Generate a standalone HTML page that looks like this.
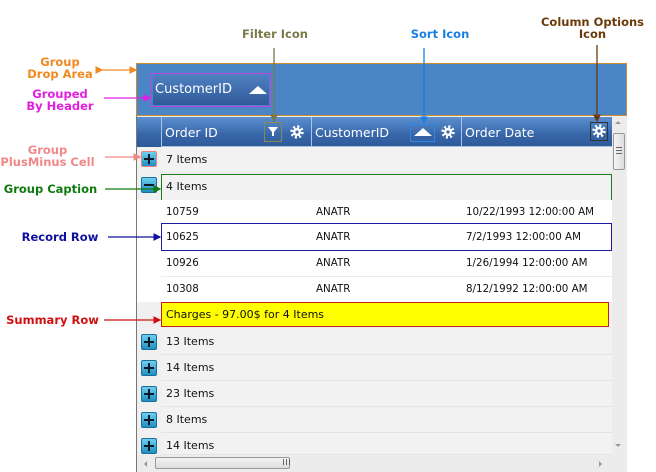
<!DOCTYPE html>
<html><head><style>
*{margin:0;padding:0;box-sizing:border-box}
body{width:656px;height:472px;background:#fff;position:relative;overflow:hidden;font-family:"DejaVu Sans","Liberation Sans",sans-serif;font-size:11px;color:#111}
.a{position:absolute}
.lbl{position:absolute;font-family:"DejaVu Sans",sans-serif;font-weight:bold;font-size:11.5px;text-align:center;line-height:12px;white-space:nowrap}
.row{position:absolute;left:161px;width:451px;height:26px;background:#f2f2f2;border-bottom:1px solid #e4e4e4;line-height:25px;padding-left:5px;font-size:11px}
.rec{position:absolute;left:161px;width:451px;height:26px;background:#fff;border-bottom:1px solid #eaeaea;line-height:25px;font-size:10.3px}
.rec span{position:absolute}
.pm{position:absolute;left:141px;width:16px;height:16px;border-radius:2px;background:linear-gradient(#6fd0f0,#1f8ec0);border:1px solid #1a6f9a}
.pm:before{content:"";position:absolute;left:2px;top:6px;width:10px;height:2px;background:#0a1a2a}
.pm.p:after{content:"";position:absolute;left:6px;top:2px;width:2px;height:10px;background:#0a1a2a}
.hd{position:absolute;top:117px;height:30px;background:linear-gradient(#5a8fd0,#3766a8 60%,#2e5a98);border-left:1px solid #a8c4e8;color:#fff;font-size:12.5px;line-height:31px;padding-left:3px}
</style></head><body>
<div class="a" style="left:136px;top:63px;width:491px;height:409px;border-left:1px solid #777;background:#f0f0f0"></div>
<div class="a" style="left:137px;top:200px;width:24px;height:102px;background:#fff"></div>
<div class="a" style="left:136px;top:63px;width:491px;height:53px;background:#4a86c6;border:1px solid #d08a30"></div>
<div class="a" style="left:151px;top:73px;width:120px;height:34px;border:1px solid #c040e0;padding:1px">
 <div style="width:100%;height:100%;background:linear-gradient(#4f80c0,#2f5a9a);color:#fff;font-size:13px;line-height:30px;padding-left:2px">CustomerID</div>
 <div class="a" style="left:97px;top:12px;width:0;height:0;border-left:9px solid transparent;border-right:9px solid transparent;border-bottom:8px solid #fff"></div>
</div>
<div class="hd" style="left:137px;width:24px;border-left:none"></div>
<div class="hd" style="left:161px;width:150px">Order ID</div>
<div class="hd" style="left:311px;width:150px">CustomerID</div>
<div class="hd" style="left:461px;width:151px">Order Date</div>
<div class="a" style="left:161px;top:146px;width:451px;height:1px;background:#a8c4e8"></div>
<div class="a" style="left:264px;top:122px;width:18px;height:20px;border:1px solid #8a8a50"></div>
<svg class="a" style="left:266px;top:125px" width="14" height="14"><path d="M2 2H12L8 7V11H6V7Z" fill="#fff"/></svg>
<div class="a" style="left:410px;top:124px;width:25px;height:18px;border:1px solid #2a8af0"></div>
<div class="a" style="left:414px;top:128px;border-left:9px solid transparent;border-right:9px solid transparent;border-bottom:8px solid #fff"></div>
<svg class="a" style="left:290px;top:125px" width="14" height="14"><circle cx="7" cy="7" r="5.2" fill="none" stroke="#fff" stroke-width="3" stroke-dasharray="2 2.1"/><circle cx="7" cy="7" r="4" fill="#fff"/><circle cx="7" cy="7" r="1.6" fill="#3a6aa8"/></svg>
<svg class="a" style="left:441px;top:125px" width="14" height="14"><circle cx="7" cy="7" r="5.2" fill="none" stroke="#fff" stroke-width="3" stroke-dasharray="2 2.1"/><circle cx="7" cy="7" r="4" fill="#fff"/><circle cx="7" cy="7" r="1.6" fill="#3a6aa8"/></svg>
<div class="a" style="left:590px;top:122px;width:18px;height:19px;border:1px solid #333"></div>
<svg class="a" style="left:592px;top:124px" width="14" height="14"><circle cx="7" cy="7" r="5.2" fill="none" stroke="#fff" stroke-width="3" stroke-dasharray="2 2.1"/><circle cx="7" cy="7" r="4" fill="#fff"/><circle cx="7" cy="7" r="1.6" fill="#3a6aa8"/></svg>
<div class="pm p" style="top:151px;border-color:#f08080"></div>
<div class="row" style="top:147px">7 Items</div>
<div class="pm" style="top:177px"></div>
<div class="row" style="top:174px;height:27px;border:1px solid #1a7a1a;padding-left:4px;line-height:24px">4 Items</div>
<div class="rec" style="top:200px"><span style="left:5px">10759</span><span style="left:155px">ANATR</span><span style="left:305px">10/22/1993 12:00:00 AM</span></div>
<div class="rec" style="top:223px;height:28px;border:1px solid #1a1aa0;line-height:26px"><span style="left:4px">10625</span><span style="left:154px">ANATR</span><span style="left:304px">7/2/1993 12:00:00 AM</span></div>
<div class="rec" style="top:251px"><span style="left:5px">10926</span><span style="left:155px">ANATR</span><span style="left:305px">1/26/1994 12:00:00 AM</span></div>
<div class="rec" style="top:277px"><span style="left:5px">10308</span><span style="left:155px">ANATR</span><span style="left:305px">8/12/1992 12:00:00 AM</span></div>
<div class="row" style="top:302px;left:161px;width:448px;background:#ffff00;border:1px solid #c02020;height:25px;line-height:23px;padding-left:4px">Charges - 97.00$ for 4 Items</div>
<div class="pm p" style="top:334px"></div><div class="row" style="top:329px">13 Items</div>
<div class="pm p" style="top:360px"></div><div class="row" style="top:355px">14 Items</div>
<div class="pm p" style="top:386px"></div><div class="row" style="top:381px">23 Items</div>
<div class="pm p" style="top:412px"></div><div class="row" style="top:407px">8 Items</div>
<div class="pm p" style="top:438px"></div><div class="row" style="top:433px;height:22px">14 Items</div>
<div class="a" style="left:612px;top:117px;width:15px;height:338px;background:#ececec"></div>
<div class="a" style="left:615px;top:121px;border-left:3px solid transparent;border-right:3px solid transparent;border-bottom:3px solid #999"></div>
<div class="a" style="left:613px;top:133px;width:12px;height:37px;border:1px solid #999;border-radius:2px;background:linear-gradient(90deg,#f4f4f4,#dcdcdc)"></div>
<div class="a" style="left:616px;top:147px;width:6px;height:7px;border-top:1px solid #666;border-bottom:1px solid #666"></div>
<div class="a" style="left:616px;top:150px;width:6px;height:1px;background:#666"></div>
<div class="a" style="left:615px;top:444px;border-left:3px solid transparent;border-right:3px solid transparent;border-top:3px solid #999"></div>
<div class="a" style="left:137px;top:455px;width:490px;height:17px;background:#ececec"></div>
<div class="a" style="left:155px;top:457px;width:135px;height:12px;border:1px solid #999;border-radius:2px;background:linear-gradient(#f4f4f4,#dcdcdc)"></div>
<div class="a" style="left:283px;top:459px;width:7px;height:6px;border-left:1px solid #666;border-right:1px solid #666"></div>
<div class="a" style="left:286px;top:459px;width:1px;height:6px;background:#666"></div>
<div class="a" style="left:144px;top:461px;border-top:3px solid transparent;border-bottom:3px solid transparent;border-right:3px solid #999"></div>
<div class="a" style="left:599px;top:461px;border-top:3px solid transparent;border-bottom:3px solid transparent;border-left:3px solid #999"></div>
<div class="lbl" style="left:15px;top:56px;width:90px;color:#f08a20">Group<br>Drop Area</div>
<div class="lbl" style="left:15px;top:88px;width:90px;color:#e020e0">Grouped<br>By Header</div>
<div class="lbl" style="left:-5px;top:144px;width:105px;color:#f08888">Group<br>PlusMinus Cell</div>
<div class="lbl" style="left:-2px;top:183px;width:105px;color:#107a10">Group Caption</div>
<div class="lbl" style="left:15px;top:231px;width:90px;color:#1010a0">Record Row</div>
<div class="lbl" style="left:0px;top:314px;width:105px;color:#d01010">Summary Row</div>
<div class="lbl" style="left:225px;top:28px;width:100px;color:#7a7a48">Filter Icon</div>
<div class="lbl" style="left:390px;top:28px;width:100px;color:#1a80e0">Sort Icon</div>
<div class="lbl" style="left:530px;top:16px;width:125px;color:#6a3a0a">Column Options<br>Icon</div>
<svg class="a" style="left:0;top:0" width="656" height="472">
<defs>
<marker id="m" markerWidth="6" markerHeight="6" refX="5" refY="3" orient="auto"><path d="M0 0L6 3L0 6Z" fill="context-stroke"/></marker>
</defs>
<g stroke-width="1.3" fill="none">
<line x1="102" y1="70" x2="136" y2="70" stroke="#f08a20" marker-end="url(#m)" marker-start="url(#m)"/>
<line x1="104" y1="98" x2="150" y2="98" stroke="#e020e0" marker-end="url(#m)"/>
<line x1="105" y1="157" x2="140" y2="157" stroke="#f08888" marker-end="url(#m)"/>
<line x1="105" y1="189" x2="160" y2="189" stroke="#107a10" marker-end="url(#m)"/>
<line x1="108" y1="237" x2="160" y2="237" stroke="#1010a0" marker-end="url(#m)"/>
<line x1="104" y1="320" x2="160" y2="320" stroke="#d01010" marker-end="url(#m)"/>
<line x1="274" y1="48" x2="274" y2="121" stroke="#7a7a48" marker-end="url(#m)"/>
<line x1="424" y1="48" x2="424" y2="123" stroke="#1a80e0" marker-end="url(#m)"/>
<line x1="597" y1="45" x2="597" y2="121" stroke="#6a3a0a" marker-end="url(#m)"/>
</g></svg>
</body></html>
